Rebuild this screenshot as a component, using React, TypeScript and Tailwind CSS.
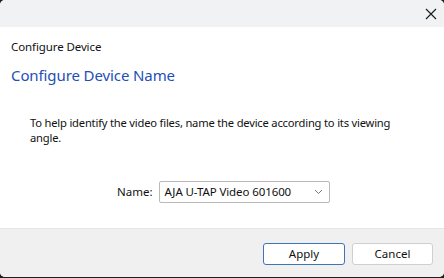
import React from 'react'

const font = { fontFamily: '"Segoe UI", "Noto Sans", "Open Sans", sans-serif' }

export default function App() {
  return (
    <div className="w-[444px] h-[278px] bg-[#1f1f1f] overflow-hidden" style={font}>
      <div className="h-[277px] bg-white rounded-[5px] flex flex-col overflow-hidden">
        {/* title bar */}
        <div className="h-[27px] bg-[#f0f2f4] flex justify-end items-center pr-[7px] shrink-0">
          <svg width="12" height="12" viewBox="0 0 12 12">
            <path d="M1 1 L11 11 M11 1 L1 11" stroke="#1a1a1a" strokeWidth="1.1" />
          </svg>
        </div>

        {/* body */}
        <div className="flex-1 flex flex-col">
          <div className="text-[11.5px] text-[#111] pl-[11px] pt-[12px] leading-[15px] tracking-[-0.1px]">Configure Device</div>
          <div className="text-[15px] text-[#1e4fb4] pl-[11px] pt-[11px] leading-[20px] tracking-[-0.1px]">Configure Device Name</div>
          <p className="text-[11.2px] text-[#111] pl-[30px] pr-[44px] mt-[30px] leading-[15px] tracking-[-0.2px]">
            To help identify the video files, name the device according to its viewing angle.
          </p>
          <div className="flex items-center mt-[36px] pl-[117px] gap-[6px]">
            <span className="text-[11.5px] text-[#111]">Name:</span>
            <div className="w-[171px] h-[22px] border border-[#b9b9b9] rounded-[2px] flex items-center justify-between pl-[5px] pr-[6px] bg-white">
              <span className="text-[11.5px] text-[#111] tracking-[-0.1px]">AJA U-TAP Video 601600</span>
              <svg width="9" height="6" viewBox="0 0 9 6">
                <path d="M1 1 L4.5 4.5 L8 1" fill="none" stroke="#666" strokeWidth="0.9" />
              </svg>
            </div>
          </div>
        </div>

        {/* footer */}
        <div className="h-[49px] bg-[#f0f0f0] border-t border-[#e6e6e6] flex justify-end items-start pt-[14px] pr-[11px] gap-[7px] shrink-0">
          <button className="w-[82px] h-[22px] bg-white border border-[#3a76b8] rounded-[3px] text-[11.5px] text-[#111]">Apply</button>
          <button className="w-[81px] h-[22px] bg-white border border-[#cfcfcf] rounded-[3px] text-[11.5px] text-[#111]">Cancel</button>
        </div>
      </div>
    </div>
  )
}
